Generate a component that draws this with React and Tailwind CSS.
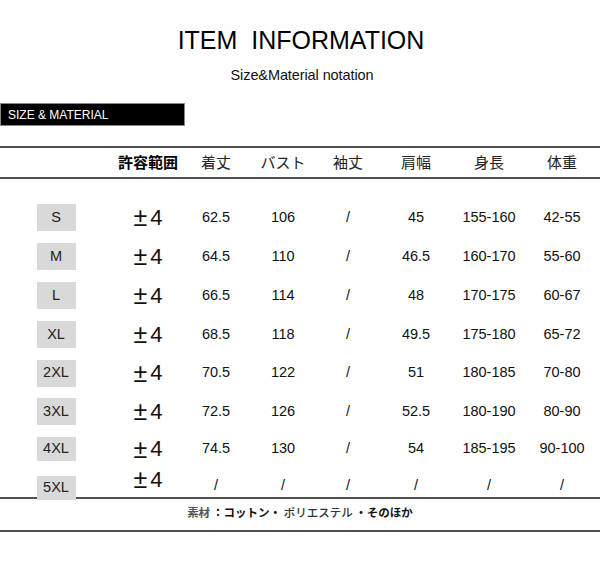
const cols = 'grid grid-cols-[112px_72px_64px_70px_60px_76px_70px_76px]'

const heads = ['', '許容範囲', '着丈', 'バスト', '袖丈', '肩幅', '身長', '体重']

const rows = [
  { size: 'S', v: ['62.5', '106', '/', '45', '155-160', '42-55'], h: 'h-[39px]' },
  { size: 'M', v: ['64.5', '110', '/', '46.5', '160-170', '55-60'], h: 'h-[39px]' },
  { size: 'L', v: ['66.5', '114', '/', '48', '170-175', '60-67'], h: 'h-[39px]' },
  { size: 'XL', v: ['68.5', '118', '/', '49.5', '175-180', '65-72'], h: 'h-[39px]' },
  { size: '2XL', v: ['70.5', '122', '/', '51', '180-185', '70-80'], h: 'h-[38px]' },
  { size: '3XL', v: ['72.5', '126', '/', '52.5', '180-190', '80-90'], h: 'h-[39px]' },
  { size: '4XL', v: ['74.5', '130', '/', '54', '185-195', '90-100'], h: 'h-[36px]', box: 'h-[24px]' },
]

function Line() {
  return <div className="h-[2px] w-full bg-[#505050]" />
}

function PlusMinus() {
  return (
    <span className="flex items-center leading-none text-[#111]">
      <span className="text-[25px]">±</span>
      <span className="ml-[3px] text-[22px]">4</span>
    </span>
  )
}

export default function App() {
  return (
    <div className="w-[600px] h-[572px] bg-white text-[#111] font-['Liberation_Sans','Noto_Sans_CJK_JP',sans-serif] overflow-hidden">
      <div className="pt-[28px] flex flex-col items-center">
        <h1 className="text-[25px] leading-[25px] text-black pl-[2px]">ITEM&nbsp; INFORMATION</h1>
        <p className="mt-[15px] text-[14.5px] leading-[14px] tracking-[-0.1px] pl-[4px]">Size&amp;Material notation</p>
      </div>

      <div className="mt-[21px] w-[185px] h-[23px] bg-black border border-[#888] flex items-center pl-[7px]">
        <span className="text-white text-[12px] leading-none">SIZE &amp; MATERIAL</span>
      </div>

      <div className="mt-[20px]">
        <Line />
        <div className={`${cols} h-[29px] items-center text-[15px] font-['Noto_Sans_CJK_JP',sans-serif] text-[#222]`}>
          {heads.map((t, i) => (
            <div key={i} className={`text-center ${i === 1 ? 'font-bold text-black' : ''}`}>{t}</div>
          ))}
        </div>
        <Line />
      </div>

      <div className="pt-[19px]">
        {rows.map((r) => (
          <div key={r.size} className={`${cols} ${r.h} items-center text-[14.5px]`}>
            <div className="flex justify-center">
              <div className={`w-[39px] ${r.box || 'h-[27px]'} bg-[#d9d9d9] flex items-center justify-center text-[14.5px] text-[#222]`}>{r.size}</div>
            </div>
            <div className="flex justify-center"><PlusMinus /></div>
            {r.v.map((v, i) => (
              <div key={i} className="text-center">{v}</div>
            ))}
          </div>
        ))}
        <div className={`${cols} h-[30px] text-[14.5px]`}>
          <div className="flex justify-center items-end">
            <div className="w-[39px] h-[24px] bg-[#d9d9d9] flex items-center justify-center text-[#222]">5XL</div>
          </div>
          <div className="flex justify-center items-center pb-[8px]"><PlusMinus /></div>
          {[0, 1, 2, 3, 4, 5].map((i) => (
            <div key={i} className="flex justify-center items-end pb-[3px]">/</div>
          ))}
        </div>
      </div>

      <Line />
      <div className="h-[31px] flex items-center justify-center pb-[3px] font-['Noto_Sans_CJK_JP',sans-serif] text-[11.5px] font-bold">
        <span className="text-[#555]">素材</span>
        <span className="ml-[2px]">：コットン・ <span className="text-[#333] font-medium">ポリエステル</span> ・そのほか</span>
      </div>
      <Line />
    </div>
  )
}
